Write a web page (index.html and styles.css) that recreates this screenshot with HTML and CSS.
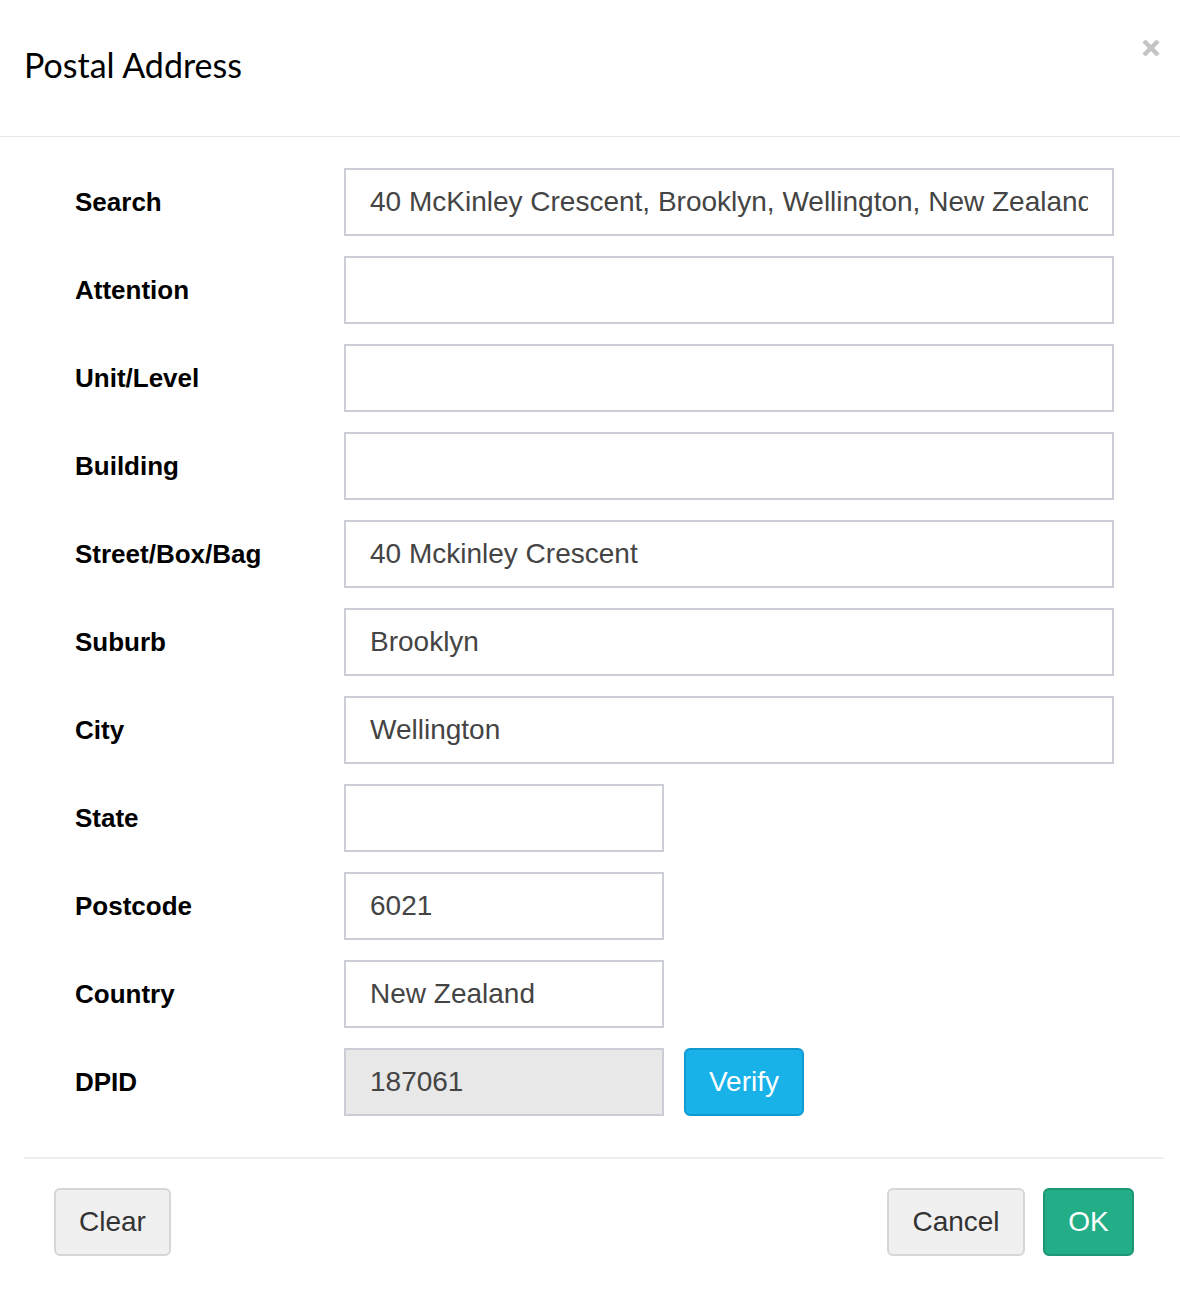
FILE: index.html
```html
<!DOCTYPE html>
<html lang="en">
<head>
  <meta charset="UTF-8">
  <meta name="viewport" content="width=device-width, initial-scale=1.0">
  <title>Postal Address</title>
  <link rel="stylesheet" href="styles.css">
</head>
<body>

  <div class="modal">

    <div class="modal-header">
      <h2 class="modal-title">Postal Address</h2>
      <button class="close" aria-label="Close">
        <svg width="20" height="20" viewBox="0 0 20 20">
          <path d="M3 3 L17 17 M17 3 L3 17" stroke="#c4c4c4" stroke-width="4.5" stroke-linecap="butt"/>
        </svg>
      </button>
    </div>

    <form class="modal-body">
      <label class="label" for="search">Search</label>
      <input class="field" id="search" type="text" value="40 McKinley Crescent, Brooklyn, Wellington, New Zealand">

      <label class="label" for="attention">Attention</label>
      <input class="field" id="attention" type="text">

      <label class="label" for="unit">Unit/Level</label>
      <input class="field" id="unit" type="text">

      <label class="label" for="building">Building</label>
      <input class="field" id="building" type="text">

      <label class="label" for="street">Street/Box/Bag</label>
      <input class="field" id="street" type="text" value="40 Mckinley Crescent">

      <label class="label" for="suburb">Suburb</label>
      <input class="field" id="suburb" type="text" value="Brooklyn">

      <label class="label" for="city">City</label>
      <input class="field" id="city" type="text" value="Wellington">

      <label class="label" for="state">State</label>
      <input class="field short" id="state" type="text">

      <label class="label" for="postcode">Postcode</label>
      <input class="field short" id="postcode" type="text" value="6021">

      <label class="label" for="country">Country</label>
      <input class="field short" id="country" type="text" value="New Zealand">

      <label class="label" for="dpid">DPID</label>
      <div class="field-row">
        <input class="field short" id="dpid" type="text" value="187061" readonly>
        <button type="button" class="button button-info">Verify</button>
      </div>
    </form>

    <div class="modal-footer">
      <button class="button button-default clear-btn">Clear</button>
      <div class="footer-right">
        <button class="button button-default cancel-btn">Cancel</button>
        <button class="button button-success ok-btn">OK</button>
      </div>
    </div>

  </div>

</body>
</html>
```

FILE: styles.css
```css
body {
  margin: 0;
  padding: 0;
  background-color: #fff;
  font-family: "Liberation Sans", Arial, sans-serif;
  color: #000;
}

.modal {
  width: 1180px;
  height: 1296px;
  background-color: #fff;
}

.modal-header {
  display: flex;
  justify-content: space-between;
  align-items: center;
  height: 136px;
  padding: 0 19px 0 24px;
  border-bottom: 1px solid #e9e9e9;
}

.modal-title {
  margin: 0 0 8px 0;
  font-family: Lato, "Open Sans", sans-serif;
  font-weight: 400;
  font-size: 34px;
  color: #000;
}

.close {
  align-self: flex-start;
  margin-top: 38px;
  padding: 0;
  border: none;
  background: none;
  width: 20px;
  height: 20px;
  cursor: pointer;
}

.modal-body {
  display: grid;
  grid-template-columns: 269px 770px;
  row-gap: 20px;
  padding: 31px 0 41px 75px;
  margin: 0;
}

.label {
  display: flex;
  align-items: center;
  font-weight: bold;
  font-size: 26px;
  color: #000;
}

.field {
  box-sizing: border-box;
  width: 770px;
  height: 68px;
  padding: 0 24px;
  border: 2px solid #cbced6;
  border-radius: 0;
  font-family: "Liberation Sans", Arial, sans-serif;
  font-size: 28px;
  color: #444;
  background-color: #fff;
  outline: none;
}

.field.short {
  width: 320px;
}

.field[readonly] {
  background-color: #e8e8e8;
}

.field-row {
  display: flex;
  gap: 20px;
}

.button {
  box-sizing: border-box;
  height: 68px;
  padding: 0;
  border-radius: 6px;
  font-family: "Liberation Sans", Arial, sans-serif;
  font-size: 28px;
  cursor: pointer;
}

.button-info {
  width: 120px;
  background-color: #18b2e9;
  border: 2px solid #1299cf;
  color: #fff;
}

.button-default {
  background-color: #f0f0f0;
  border: 2px solid #d6d6d6;
  color: #333;
}

.button-success {
  background-color: #24ae88;
  border: 2px solid #1c9673;
  color: #fff;
}

.modal-footer {
  display: flex;
  justify-content: space-between;
  margin: 0 16px 0 24px;
  padding: 29px 30px 0 30px;
  border-top: 2px solid #efefef;
}

.footer-right {
  display: flex;
  gap: 18px;
}

.clear-btn {
  width: 117px;
}

.cancel-btn {
  width: 138px;
}

.ok-btn {
  width: 91px;
}
```
